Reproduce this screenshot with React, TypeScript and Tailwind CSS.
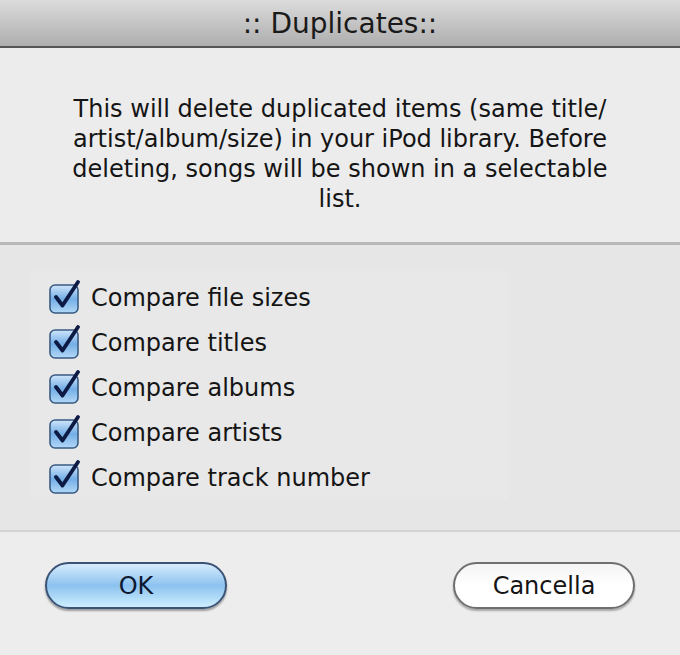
import React from 'react';

const options = [
  'Compare file sizes',
  'Compare titles',
  'Compare albums',
  'Compare artists',
  'Compare track number',
];

const CheckBox: React.FC = () => (
  <svg width="34" height="34" viewBox="0 0 34 34" className="shrink-0">
    <defs>
      <linearGradient id="cbFill" x1="0" y1="0" x2="0" y2="1">
        <stop offset="0" stopColor="#cfe6fb" />
        <stop offset="0.5" stopColor="#74aee6" />
        <stop offset="1" stopColor="#b3d9f8" />
      </linearGradient>
    </defs>
    <rect x="2" y="5" width="28" height="28" rx="5" fill="url(#cbFill)" stroke="#3a5a82" strokeWidth="1.6" />
    <path d="M8 17 L14.5 25.5 L30 2" fill="none" stroke="#0c1a44" strokeWidth="3.8" strokeLinecap="round" strokeLinejoin="round" />
  </svg>
);

const App: React.FC = () => {
  return (
    <div
      className="w-[680px] h-[655px] overflow-hidden bg-[#ececec] flex flex-col text-[#111]"
      style={{ fontFamily: '"DejaVu Sans", "Noto Sans", sans-serif' }}
    >
      {/* Title bar */}
      <div className="h-[48px] shrink-0 bg-gradient-to-b from-[#dcdcdc] to-[#aeaeae] border-b-2 border-[#555] flex items-center justify-center">
        <span className="text-[28px] text-[#1a1a1a] mt-[2px]">:: Duplicates::</span>
      </div>

      {/* Description */}
      <div className="h-[194px] shrink-0 bg-[#ececec] flex items-center justify-center px-[58px] pt-[18px]">
        <p className="text-center text-[24px] leading-[30px] text-[#151515]">
          This will delete duplicated items (same title/ artist/album/size) in your iPod library. Before deleting, songs will be shown in a selectable list.
        </p>
      </div>

      {/* Options */}
      <div className="h-[290px] shrink-0 bg-[#e6e6e6] border-t-[3px] border-[#b9b9b9] border-b-2 border-b-[#d4d4d4] pt-[26px] pl-[30px]">
        <div className="w-[478px] h-[228px] bg-[#e8e8e8] flex flex-col pl-[18px] pt-[4px]">
          {options.map((o) => (
            <div key={o} className="h-[45px] flex items-center gap-[9px]">
              <CheckBox />
              <span className="text-[24px] text-[#151515] mt-[2px]">{o}</span>
            </div>
          ))}
        </div>
      </div>

      {/* Buttons */}
      <div className="flex-1 bg-[#ededed] flex items-start justify-between px-[45px] pt-[30px]">
        <button className="w-[182px] h-[47px] rounded-full border-2 border-[#3b5475] bg-gradient-to-b from-[#d6ebfc] via-[#8cc2ef] to-[#cdefff] shadow-[0_2px_2px_rgba(0,0,0,0.35)] text-[24px] text-[#0e1a33] flex items-center justify-center">
          OK
        </button>
        <button className="w-[182px] h-[47px] rounded-full border-2 border-[#6f6f6f] bg-gradient-to-b from-[#f4f4f4] via-[#ffffff] to-[#ffffff] shadow-[0_2px_2px_rgba(0,0,0,0.3)] text-[24px] text-[#151515] flex items-center justify-center">
          Cancella
        </button>
      </div>
    </div>
  );
};

export default App;
